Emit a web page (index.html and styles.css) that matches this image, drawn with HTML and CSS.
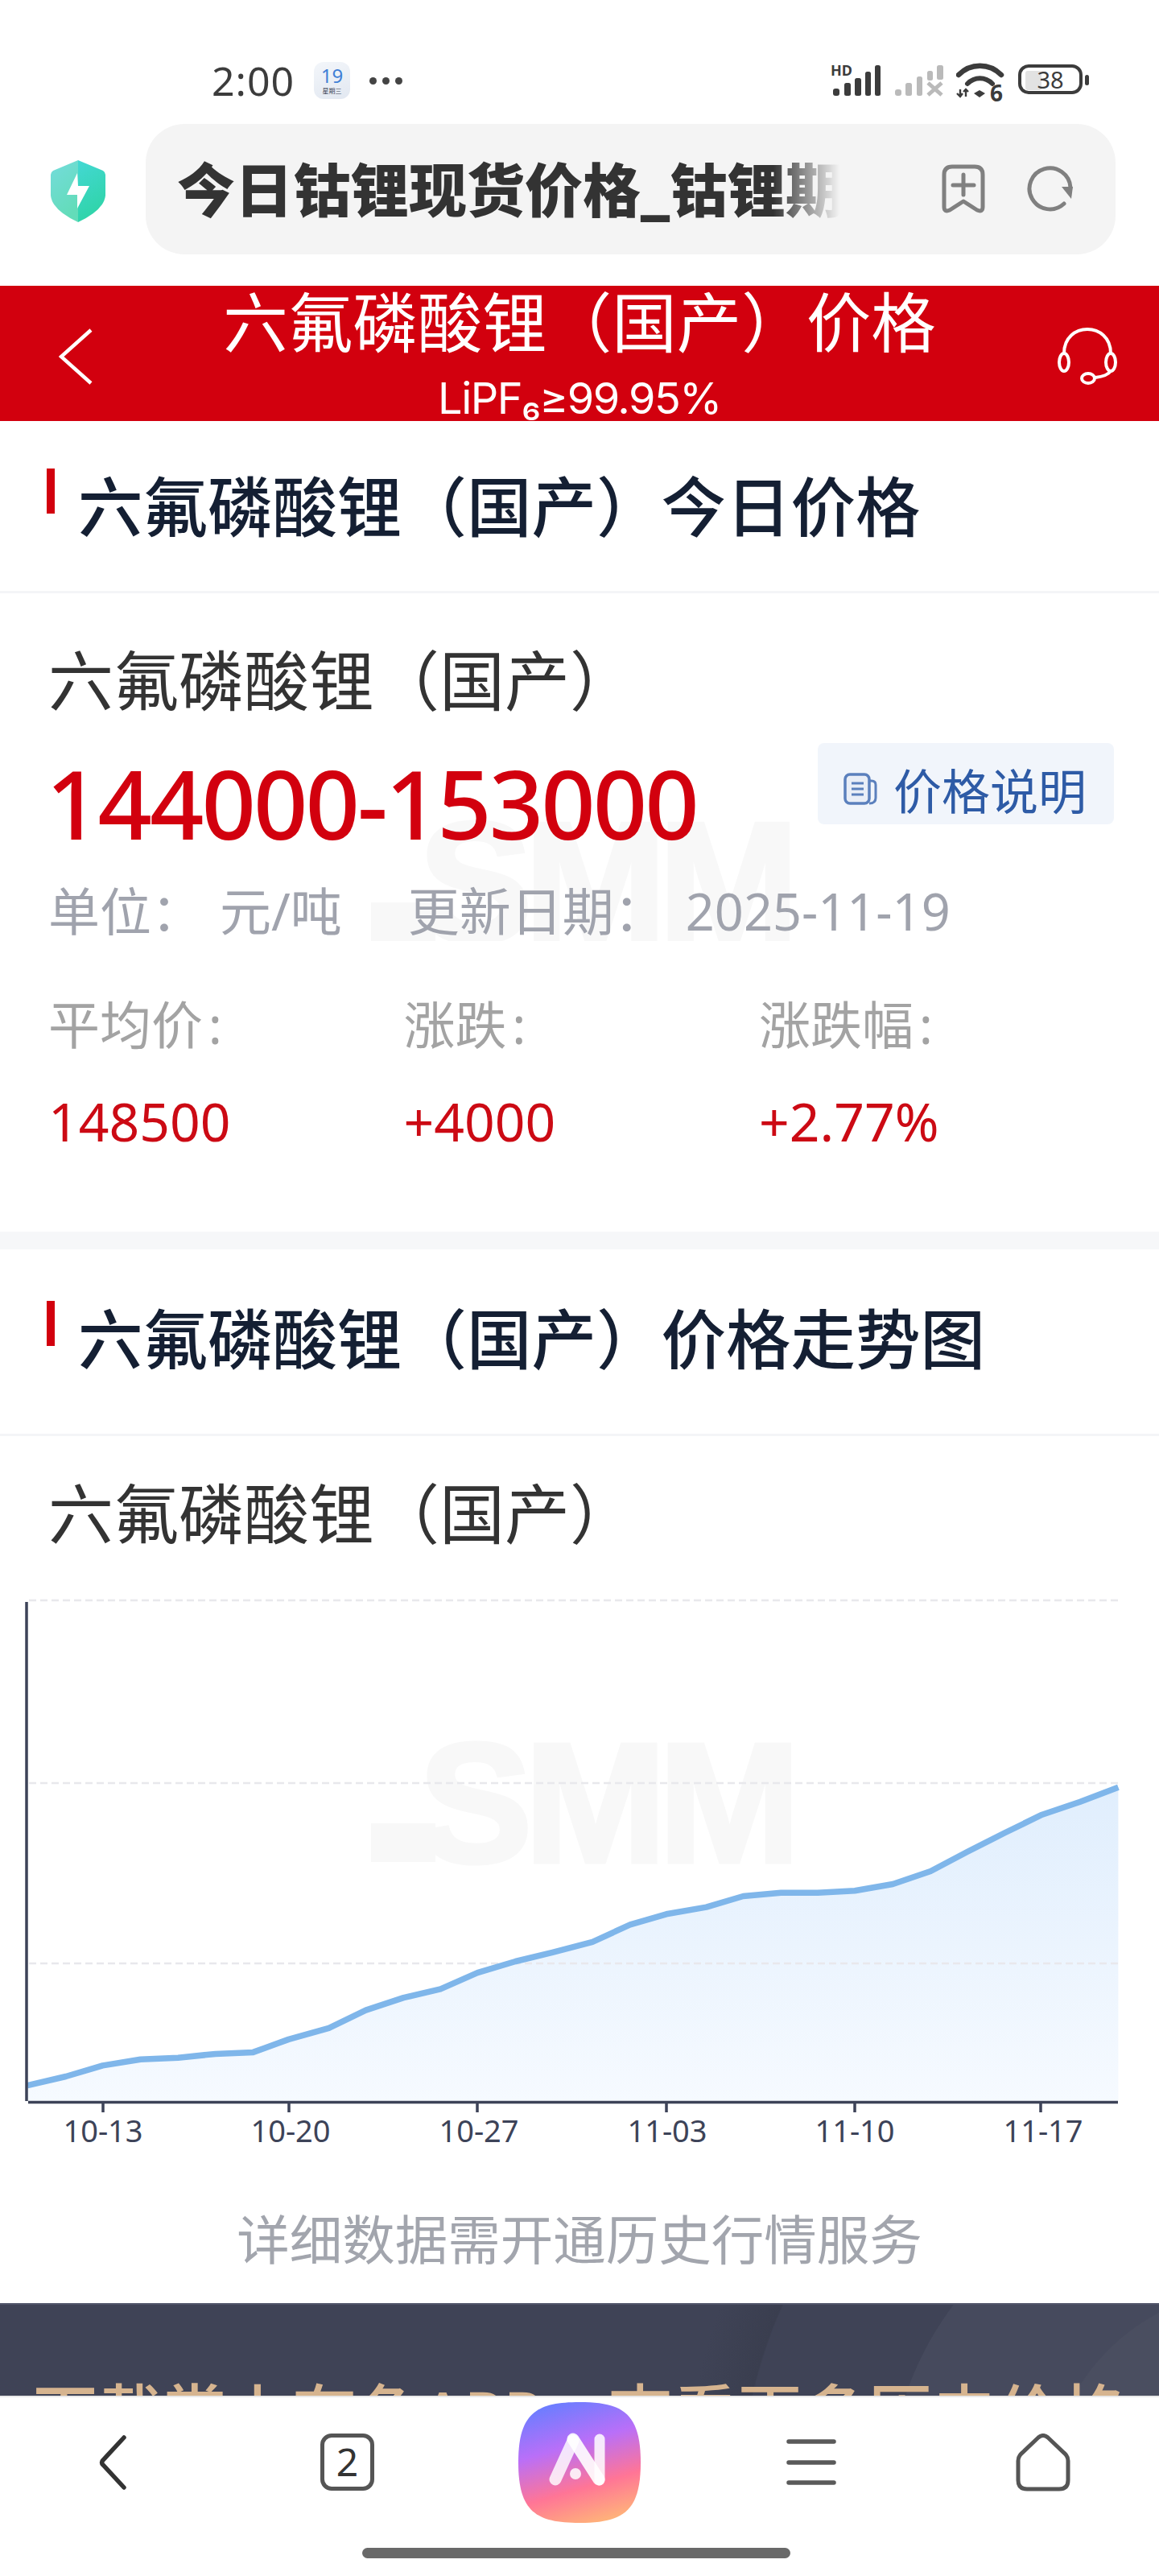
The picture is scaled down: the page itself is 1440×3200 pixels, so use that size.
FILE: index.html
```html
<!DOCTYPE html>
<html lang="zh-CN">
<head>
    <meta charset="UTF-8">
    <meta name="viewport" content="width=device-width, initial-scale=1.0">
    <title>六氟磷酸锂（国产）价格</title>
    <link rel="stylesheet" href="styles.css">
</head>
<body>
<div class="app">

    <!-- phone status bar -->
    <div class="statusbar">
        <span class="time">2:00</span>
        <div class="calendar">
            <span class="calendar-day">19</span>
            <span class="calendar-week">星期三</span>
        </div>
        <div class="dots"><i></i><i></i><i></i></div>
        <div class="status-icons">
            <svg width="64" height="40" viewBox="0 0 64 40">
                <text x="0" y="14" class="hd-text">HD</text>
                <rect x="3" y="30" width="8" height="9" rx="3" fill="#3c3c3c"/>
                <rect x="17" y="23" width="8" height="16" rx="2.5" fill="#3c3c3c"/>
                <rect x="30" y="17" width="8" height="22" rx="2.5" fill="#3c3c3c"/>
                <rect x="43" y="9" width="7" height="30" rx="2.5" fill="#3c3c3c"/>
                <rect x="55" y="1" width="7" height="38" rx="2.5" fill="#3c3c3c"/>
            </svg>
            <svg width="60" height="40" viewBox="0 0 60 40">
                <rect x="0" y="31" width="8" height="8" rx="3" fill="#bababa"/>
                <rect x="13" y="23" width="8" height="16" rx="2.5" fill="#bababa"/>
                <rect x="27" y="15" width="7" height="24" rx="2.5" fill="#bababa"/>
                <rect x="40" y="8" width="7" height="12" rx="2.5" fill="#bababa"/>
                <rect x="52" y="1" width="8" height="18" rx="2.5" fill="#bababa"/>
                <path d="M41 23l17 15M58 23L41 38" stroke="#bababa" stroke-width="5" fill="none"/>
            </svg>
            <svg class="wifi" width="61" height="50" viewBox="0 0 61 50">
                <path d="M3 15C18 0 41 0 56 15" stroke="#3c3c3c" stroke-width="6.5" fill="none" stroke-linecap="round"/>
                <path d="M14 26C23 17 36 17 45 26" stroke="#3c3c3c" stroke-width="6" fill="none" stroke-linecap="round"/>
                <path d="M29 34l7 4-7 5-7-5z" fill="#3c3c3c"/>
                <path d="M5 33v8M1 38l4 4 3-4M12 42v-9M9 36l3-3 3 3" stroke="#3c3c3c" stroke-width="2.4" fill="none"/>
                <text x="42" y="48" class="wifi-six">6</text>
            </svg>
            <svg width="90" height="38" viewBox="0 0 90 38">
                <rect x="2" y="2" width="76" height="33" rx="11" fill="none" stroke="#3c3c3c" stroke-width="4"/>
                <rect x="9" y="8" width="20" height="24" rx="3" fill="#e2e2e2"/>
                <text x="40" y="30" text-anchor="middle" class="battery-text">38</text>
                <rect x="83" y="13" width="5" height="13" rx="2.5" fill="#3c3c3c"/>
            </svg>
        </div>
    </div>

    <!-- browser address row -->
    <div class="address-row">
        <svg class="shield" width="68" height="77" viewBox="0 0 68 77">
            <defs>
                <linearGradient id="shieldLeft" x1="0" y1="0" x2="0.4" y2="1">
                    <stop offset="0" stop-color="#74dcdc"/>
                    <stop offset="1" stop-color="#63dcb9"/>
                </linearGradient>
                <linearGradient id="shieldRight" x1="0" y1="0" x2="0.3" y2="1">
                    <stop offset="0" stop-color="#44d8d4"/>
                    <stop offset="1" stop-color="#2fd4a8"/>
                </linearGradient>
            </defs>
            <path d="M34 0L3 13Q0 15 0 18V44Q2 62 34 77Z" fill="url(#shieldLeft)"/>
            <path d="M34 0L65 13Q68 15 68 18V44Q66 62 34 77Z" fill="url(#shieldRight)"/>
            <path d="M33 16L20 43H33V60L48 32H34Z" fill="#fff"/>
        </svg>
        <div class="address-bar">
            <div class="address-text">今日钴锂现货价格_钴锂期货价格</div>
            <svg class="bookmark" width="54" height="62" viewBox="0 0 54 62">
                <path d="M13 3H41Q51 3 51 13V53Q51 60 44 57L27 46 10 57Q3 60 3 53V13Q3 3 13 3Z" fill="none" stroke="#808080" stroke-width="5" stroke-linejoin="round"/>
                <path d="M27 13V38M14 26H40" stroke="#808080" stroke-width="5" stroke-linecap="round"/>
            </svg>
            <svg class="reload" width="58" height="58" viewBox="0 0 58 58">
                <path d="M46 47A25.500 25.500 0 1 1 54 27" fill="none" stroke="#808080" stroke-width="5" stroke-linecap="round"/>
                <path d="M43 26H57L55 41Z" fill="#808080"/>
            </svg>
        </div>
    </div>

    <!-- red page header -->
    <header class="page-header">
        <svg class="header-back" width="42" height="70" viewBox="0 0 42 70">
            <path d="M40 2L3 35l37 33" fill="none" stroke="#fff" stroke-width="4.500"/>
        </svg>
        <div class="header-center">
            <div class="header-title">六氟磷酸锂（国产）价格</div>
            <div class="header-sub">LiPF₆≥99.95%</div>
        </div>
        <svg class="header-service" width="74" height="72" viewBox="0 0 74 72">
            <path d="M8 32C8 -8 66 -8 66 32" fill="none" stroke="#fff" stroke-width="4"/>
            <ellipse cx="8" cy="43" rx="6" ry="11" fill="none" stroke="#fff" stroke-width="4"/>
            <ellipse cx="66" cy="43" rx="6" ry="11" fill="none" stroke="#fff" stroke-width="4"/>
            <path d="M66 54Q62 60 47 62" fill="none" stroke="#fff" stroke-width="4"/>
            <ellipse cx="38" cy="63" rx="8" ry="6" fill="none" stroke="#fff" stroke-width="4"/>
        </svg>
    </header>

    <section class="section-head">
        <span class="section-mark"></span>
        <h2 class="section-title">六氟磷酸锂（国产）今日价格</h2>
    </section>

    <section class="price-card">
        <svg class="watermark" width="520" height="155" viewBox="461 2158 520 155">
            <rect x="461" y="2265" width="80" height="48" fill="#f8f8f8"/>
            <text x="520" y="2313" class="chart-watermark">SMM</text>
        </svg>
        <div class="product-name">六氟磷酸锂（国产）</div>
        <div class="price-row">
            <div class="price">144000-153000</div>
            <a class="price-note">
                <svg width="42" height="40" viewBox="0 0 42 40">
                    <rect x="2" y="2" width="30" height="36" rx="6" fill="#e9eef7" stroke="#5b80bd" stroke-width="3.500"/>
                    <path d="M32 10h3q5 0 5 5v16q0 7-8 7" fill="none" stroke="#5b80bd" stroke-width="3"/>
                    <path d="M10 13h15M10 20h15M10 27h15" stroke="#5b80bd" stroke-width="3"/>
                </svg>
                <span>价格说明</span>
            </a>
        </div>
        <div class="meta-row">
            <span class="meta-label">单位：</span><span class="meta-unit">元/吨</span><span class="meta-label meta-date-label">更新日期：</span><span class="meta-date">2025-11-19</span>
        </div>
        <div class="stats">
            <div class="stat-label">平均价 :</div>
            <div class="stat-label">涨跌 :</div>
            <div class="stat-label">涨跌幅 :</div>
            <div class="stat-value">148500</div>
            <div class="stat-value">+4000</div>
            <div class="stat-value">+2.77%</div>
        </div>
    </section>

    <section class="section-head section-head-tall">
        <span class="section-mark"></span>
        <h2 class="section-title">六氟磷酸锂（国产）价格走势图</h2>
    </section>

    <section class="chart-card">
        <div class="product-name product-name-chart">六氟磷酸锂（国产）</div>
        <svg class="chart" width="1440" height="740" viewBox="0 1960 1440 740">
            <defs>
                <linearGradient id="areaFill" x1="0" y1="0" x2="0" y2="1">
                    <stop offset="0" stop-color="#e0eefd"/>
                    <stop offset="1" stop-color="#f6faff"/>
                </linearGradient>
            </defs>
            <rect x="461" y="2265" width="80" height="48" fill="#f8f8f8"/>
            <text x="520" y="2313" class="chart-watermark">SMM</text>
            <path class="area" d="M34 2590.600L81.700 2579.500 127.600 2565.900 174.500 2558.200 221.300 2556.200 267.700 2551.400 314.500 2549.400 358.600 2533.400 408.600 2519.400 454.500 2497.100 501.400 2481.600 547.300 2470.900 593.200 2450.600 640.500 2436.500 686.400 2425.300 736.100 2412.300 782.900 2390.900 827.900 2377.800 877.500 2369.100 923.400 2355.500 970.200 2351.200 1016.100 2351.200 1062 2348.800 1109.300 2340.500 1156.200 2324.500 1202.100 2300.300 1248 2277 1294.800 2254.200 1342.100 2238.200 1389.400 2220.300V2610H34Z"/>
            <path class="grid" d="M36 1988H1389M36 2215H1389M36 2439H1389"/>
            <path class="line" d="M34 2590.600L81.700 2579.500 127.600 2565.900 174.500 2558.200 221.300 2556.200 267.700 2551.400 314.500 2549.400 358.600 2533.400 408.600 2519.400 454.500 2497.100 501.400 2481.600 547.300 2470.900 593.200 2450.600 640.500 2436.500 686.400 2425.300 736.100 2412.300 782.900 2390.900 827.900 2377.800 877.500 2369.100 923.400 2355.500 970.200 2351.200 1016.100 2351.200 1062 2348.800 1109.300 2340.500 1156.200 2324.500 1202.100 2300.300 1248 2277 1294.800 2254.200 1342.100 2238.200 1389.400 2220.300"/>
            <path class="axis" d="M33 1990V2610M35 2611.500H1389M128 2611V2624M359 2611V2624M593 2611V2624M828 2611V2624M1062 2611V2624M1293 2611V2624"/>
            <text x="128" y="2661" class="tick">10-13</text>
            <text x="361" y="2661" class="tick">10-20</text>
            <text x="595" y="2661" class="tick">10-27</text>
            <text x="829" y="2661" class="tick">11-03</text>
            <text x="1062" y="2661" class="tick">11-10</text>
            <text x="1296" y="2661" class="tick">11-17</text>
        </svg>
        <div class="chart-note">详细数据需开通历史行情服务</div>
    </section>

    <div class="app-banner">下载掌上有色APP，查看更多历史价格</div>

    <!-- browser bottom toolbar -->
    <nav class="toolbar">
        <div class="toolbar-icons">
            <svg class="tool-back" width="36" height="68" viewBox="0 0 36 68">
                <path d="M32 3L6 31Q3 34 6 37L32 65" fill="none" stroke="#333" stroke-width="5.500" stroke-linecap="round"/>
            </svg>
            <div class="tab-count">2</div>
            <svg class="app-logo" width="152" height="150" viewBox="0 0 152 150">
                <defs>
                    <linearGradient id="logoBg" x1="0.35" y1="0" x2="0.65" y2="1">
                        <stop offset="0" stop-color="#6d7dff"/>
                        <stop offset="0.35" stop-color="#b96ff8"/>
                        <stop offset="0.7" stop-color="#ff7596"/>
                        <stop offset="1" stop-color="#ffb27a"/>
                    </linearGradient>
                </defs>
                <path d="M76 0C130 0 152 14 152 75S130 150 76 150 0 136 0 75 22 0 76 0Z" fill="url(#logoBg)"/>
                <path d="M46 96L68 48" stroke="#fff" stroke-opacity="0.82" stroke-width="15" stroke-linecap="round"/>
                <path d="M68 46L100 96" stroke="#fff" stroke-opacity="0.9" stroke-width="15" stroke-linecap="round"/>
                <path d="M101 46V97" stroke="#fff" stroke-opacity="0.85" stroke-width="13" stroke-linecap="round"/>
                <circle cx="71" cy="89" r="7" fill="#fff" fill-opacity="0.85"/>
            </svg>
            <svg class="tool-menu" width="62" height="62" viewBox="0 0 62 62">
                <path d="M3 5H59M3 31H59M3 56H59" stroke="#5a5a5a" stroke-width="5.500" stroke-linecap="round"/>
            </svg>
            <svg class="tool-home" width="68" height="72" viewBox="0 0 68 72">
                <path d="M28 5Q34 0 40 5L60 24Q65 28 65 34V58Q65 69 54 69H14Q3 69 3 58V34Q3 28 8 24Z" fill="none" stroke="#555" stroke-width="5"/>
            </svg>
        </div>
        <div class="home-bar"></div>
    </nav>

</div>
</body>
</html>
```

FILE: styles.css
```css
* {
    box-sizing: border-box;
}
html, body {
    margin: 0;
    padding: 0;
    background: white;
}
body {
    font-family: "Noto Sans", "Noto Sans CJK SC", sans-serif;
}
.app {
    position: relative;
    display: flex;
    flex-direction: column;
    width: 1440px;
    height: 3200px;
    overflow: hidden;
    background: white;
}

/* status bar */
.statusbar {
    display: flex;
    align-items: center;
    height: 154px;
    padding: 46px 85px 0 263px;
    color: #3c3c3c;
}
.time {
    width: 127px;
    font-size: 50px;
    line-height: 60px;
    letter-spacing: 1px;
}
.calendar {
    display: flex;
    flex-direction: column;
    align-items: center;
    width: 45px;
    height: 46px;
    border-radius: 12px;
    background: linear-gradient(160deg, #f3f6fa, #e2e8f1);
}
.calendar-day {
    font-size: 24px;
    line-height: 28px;
    margin-top: 3px;
    color: #3f7fd6;
}
.calendar-week {
    font-size: 8px;
    line-height: 10px;
    color: #3c4454;
}
.dots {
    display: flex;
    gap: 7px;
    margin-left: 24px;
}
.dots i {
    display: block;
    width: 9px;
    height: 9px;
    border-radius: 50%;
    background: #444;
}
.status-icons {
    display: flex;
    align-items: flex-start;
    gap: 16px;
    margin-top: 6px;
    margin-left: auto;
}
.status-icons svg {
    margin-top: 2px;
}
.status-icons .wifi {
    margin-top: 0;
}
.hd-text {
    font-size: 18px;
    font-weight: 700;
    fill: #3c3c3c;
}
.wifi-six {
    font-size: 28px;
    font-weight: 700;
    fill: #3c3c3c;
}
.battery-text {
    font-size: 29px;
    fill: #3c3c3c;
}

/* address row */
.address-row {
    display: flex;
    align-items: center;
    height: 201px;
    padding: 0 54px 39px 63px;
}
.shield {
    flex: none;
    margin-top: 5px;
    margin-right: 50px;
}
.address-bar {
    display: flex;
    align-items: center;
    flex: 1;
    height: 162px;
    padding-left: 39px;
    border-radius: 48px;
    background: #f4f4f4;
}
.address-text {
    width: 823px;
    margin-top: -8px;
    overflow: hidden;
    white-space: nowrap;
    font-size: 72px;
    font-weight: 900;
    color: #333;
    -webkit-mask-image: linear-gradient(to right, #000 90%, transparent 100%);
    mask-image: linear-gradient(to right, #000 90%, transparent 100%);
}
.bookmark {
    flex: none;
    margin-left: 127px;
}
.reload {
    flex: none;
    margin-left: 52px;
}

/* red header */
.page-header {
    display: grid;
    grid-template-columns: 160px 1fr 160px;
    align-items: center;
    height: 168px;
    background: #d2000e;
    color: white;
    overflow: hidden;
}
.header-back {
    margin-left: 73px;
    margin-top: 8px;
}
.header-service {
    justify-self: end;
    margin-right: 52px;
    margin-top: 8px;
}
.header-center {
    text-align: center;
    align-self: start;
}
.header-title {
    font-size: 80.500px;
    line-height: 90px;
}
.header-sub {
    margin-top: 22px;
    font-family: Inter, "Noto Sans CJK SC", sans-serif;
    font-size: 54px;
    line-height: 56px;
    letter-spacing: -1.500px;
}

/* section heading */
.section-head {
    display: flex;
    align-items: flex-start;
    height: 214px;
    padding: 59px 0 0 58px;
    border-bottom: 3px solid #f4f5f7;
}
.section-head-tall {
    height: 232px;
    padding-top: 64px;
}
.section-mark {
    flex: none;
    width: 10px;
    height: 56px;
    margin-right: 29px;
    background: #d2000e;
}
.section-title {
    margin: 7px 0 0;
    font-size: 80.500px;
    line-height: 80px;
    font-weight: 500;
    color: #141f33;
}

/* price card */
.price-card {
    position: relative;
    padding: 68px 56px 103px 60px;
    border-bottom: 22px solid #f6f7f9;
}
.watermark {
    position: absolute;
    top: 277px;
    left: 461px;
}
.product-name {
    position: relative;
    font-size: 81px;
    line-height: 80px;
    color: #333;
}
.price-row {
    position: relative;
    display: flex;
    justify-content: space-between;
    align-items: flex-start;
    margin-top: 38px;
}
.price {
    margin-top: 17px;
    margin-left: -3px;
    font-size: 118px;
    line-height: 116px;
    font-weight: 500;
    letter-spacing: -3px;
    color: #d2000e;
}
.price-note {
    display: flex;
    align-items: center;
    gap: 20px;
    width: 368px;
    height: 101px;
    padding: 12px 0 0 32px;
    border-radius: 8px;
    background: #f1f5fb;
    font-size: 60px;
    color: #2e5ba6;
}
.meta-row {
    position: relative;
    margin-top: 41px;
    font-size: 64px;
    line-height: 70px;
    color: #a0a3ad;
    white-space: nowrap;
}
.meta-unit {
    margin-left: 21px;
}
.meta-date-label {
    margin-left: 82px;
}
.meta-date {
    margin-left: 25px;
    font-size: 63px;
}
.stats {
    position: relative;
    display: grid;
    grid-template-columns: repeat(3, 441.500px);
    row-gap: 49px;
    margin-top: 71px;
    line-height: 70px;
}
.stat-label {
    font-size: 64px;
    word-spacing: -10px;
    color: #a3a3a3;
}
.stat-value {
    font-size: 66px;
    color: #cc0a14;
}

/* chart */
.chart-card {
    padding: 56px 0 39px;
}
.product-name-chart {
    padding-left: 60px;
}
.chart {
    display: block;
    margin-top: 40px;
}
.chart-watermark {
    font-family: "Liberation Sans", sans-serif;
    font-size: 212px;
    font-weight: 700;
    letter-spacing: -10px;
    fill: #f8f8f8;
    stroke: #f8f8f8;
    stroke-width: 5;
}
.area {
    fill: url(#areaFill);
}
.grid {
    fill: none;
    stroke: #e8e8ec;
    stroke-width: 2.500;
    stroke-dasharray: 9 5;
}
.line {
    fill: none;
    stroke: #7fb6ea;
    stroke-width: 7.500;
    stroke-linejoin: round;
}
.axis {
    fill: none;
    stroke: #3d4358;
    stroke-width: 3.500;
}
.tick {
    font-size: 38px;
    fill: #3d4358;
    text-anchor: middle;
}
.chart-note {
    margin-top: 42px;
    font-size: 65.500px;
    line-height: 80px;
    text-align: center;
    color: #a2a5ad;
}

/* dark download banner, cut off by the toolbar */
.app-banner {
    flex: 1;
    min-height: 0;
    overflow: hidden;
    padding-top: 90px;
    border-top: 2px solid #51556a;
    font-size: 80.500px;
    line-height: 90px;
    font-weight: 500;
    text-align: center;
    white-space: nowrap;
    color: #d6b48f;
    background:
        radial-gradient(circle at 1560px 239px, #4a4e60 258px, transparent 259px),
        radial-gradient(circle at 1500px 239px, #464a5d 395px, transparent 396px),
        radial-gradient(circle at 1500px 239px, transparent 578px, #3a3e4f 580px, #3f4356 650px),
        #3f4356;
}

/* bottom toolbar */
.toolbar {
    flex: none;
    height: 224px;
    border-top: 2px solid #e8e8e8;
    background: white;
}
.toolbar-icons {
    display: flex;
    align-items: center;
    height: 156px;
    padding: 5px 0 0 122px;
}
.tab-count {
    flex: none;
    width: 67px;
    height: 71px;
    margin-left: 240px;
    border: 5px solid #555;
    border-radius: 14px;
    font-size: 48px;
    line-height: 60px;
    text-align: center;
    color: #333;
}
.app-logo {
    flex: none;
    margin-left: 179px;
}
.tool-menu {
    flex: none;
    margin-left: 181px;
}
.tool-home {
    flex: none;
    margin-left: 223px;
}
.home-bar {
    width: 532px;
    height: 13px;
    margin: 31px 0 0 450px;
    border-radius: 7px;
    background: #696969;
}
```
